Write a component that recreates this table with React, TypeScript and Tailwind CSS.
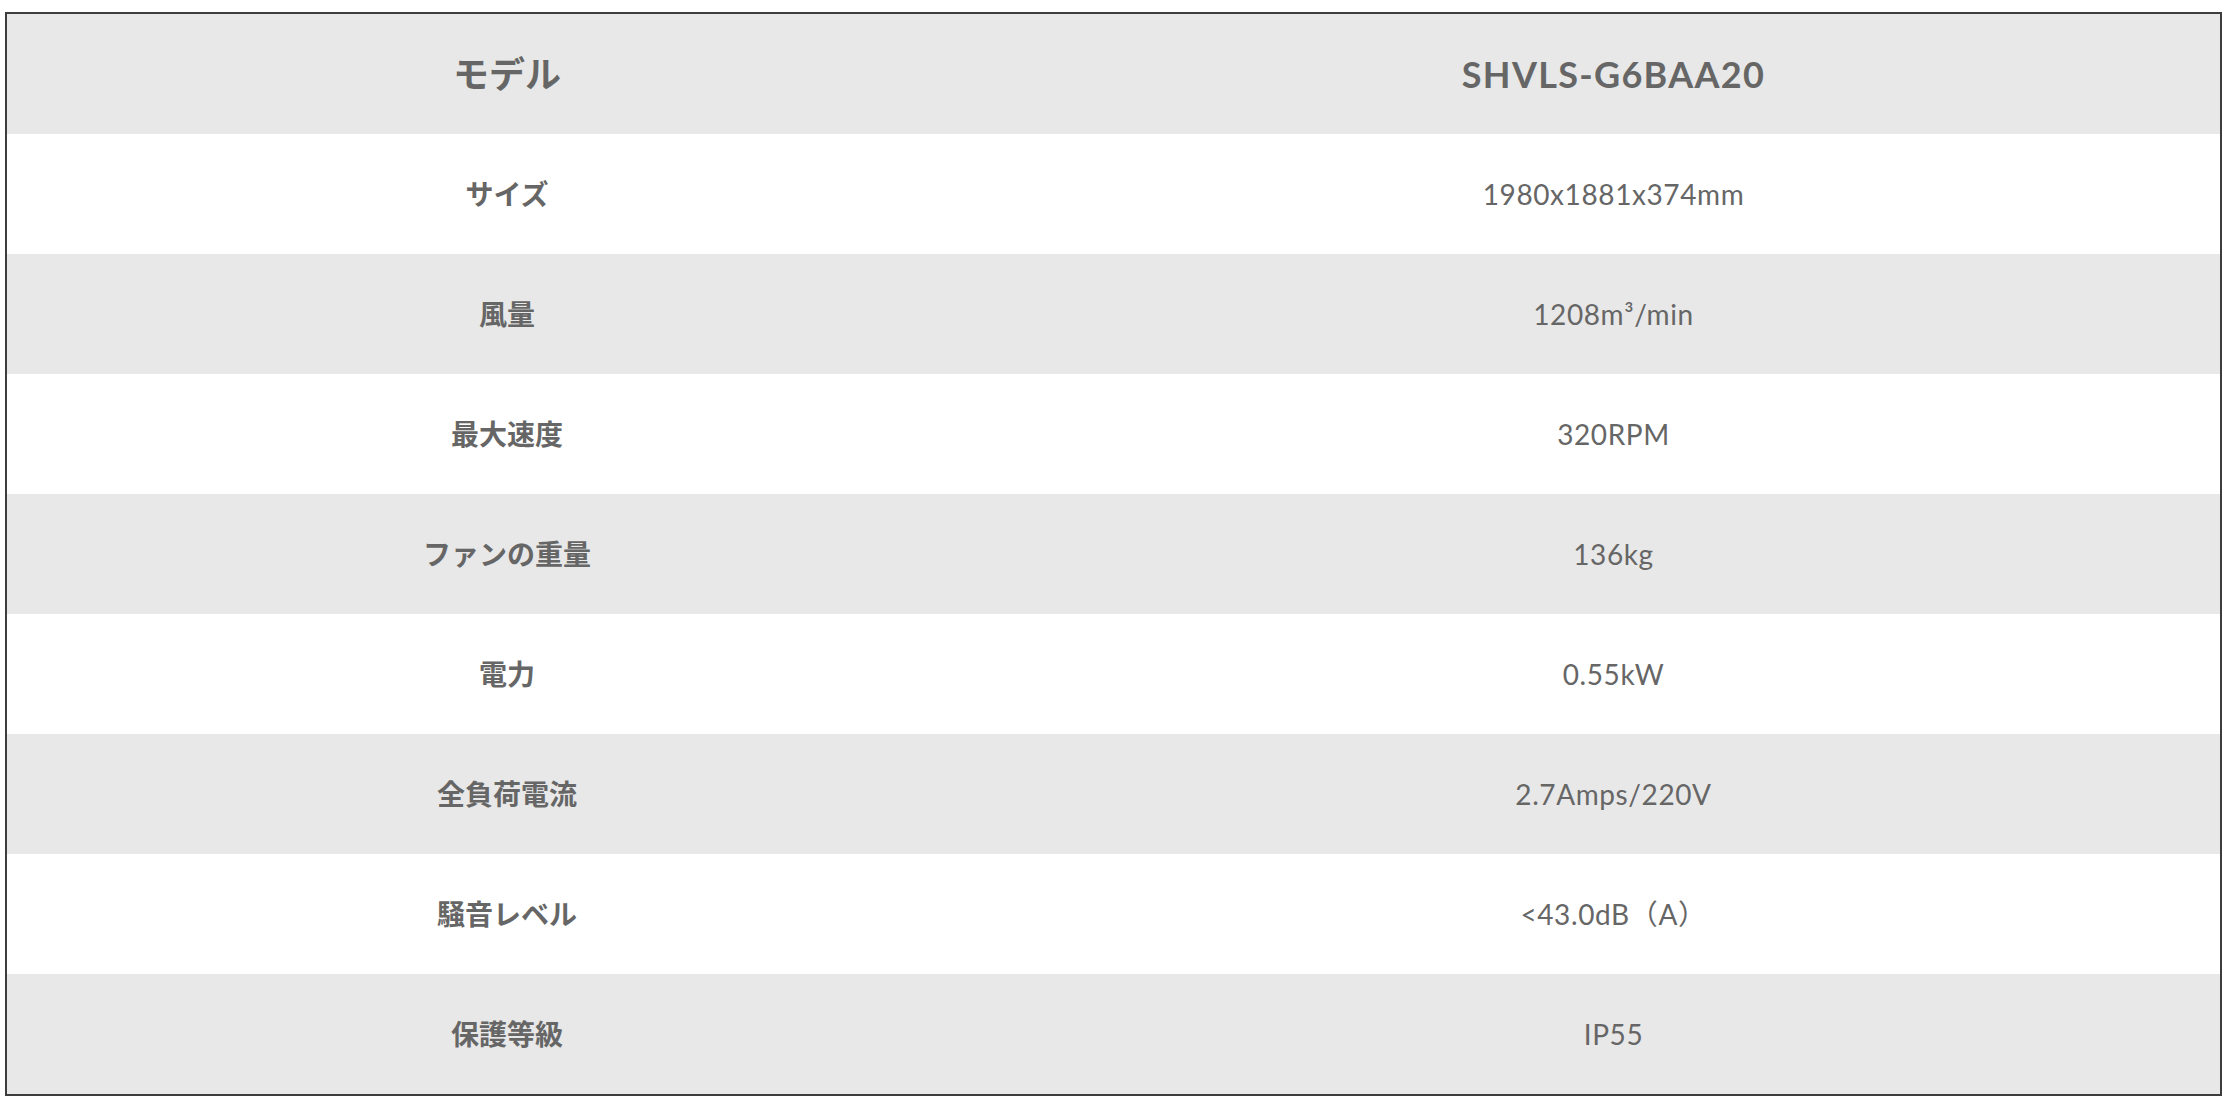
const SPECS: [string, string][] = [
  ["サイズ", "1980x1881x374mm"],
  ["風量", "1208m³/min"],
  ["最大速度", "320RPM"],
  ["ファンの重量", "136kg"],
  ["電力", "0.55kW"],
  ["全負荷電流", "2.7Amps/220V"],
  ["騒音レベル", "<43.0dB（A）"],
  ["保護等級", "IP55"],
];

const FONT = "font-['Lato','Noto_Sans_CJK_JP',sans-serif]";

export default function App() {
  return (
    <div className={`min-h-screen bg-white pt-[12px] pl-[5px] ${FONT}`}>
      <div className="w-[2217px] border-2 border-[#3d3d3d]">
        {/* header */}
        <div className="grid grid-cols-[1000px_1fr] h-[120px] bg-[#e8e8e8] text-[#666666] text-[36px] font-bold">
          <div className="flex items-center justify-center">モデル</div>
          <div className="flex items-center justify-center tracking-[1.3px]">SHVLS-G6BAA20</div>
        </div>

        {SPECS.map(([label, value], i) => (
          <div
            key={label}
            className={`grid grid-cols-[1000px_1fr] h-[120px] text-[#666666] text-[28px] ${
              i % 2 === 0 ? "bg-white" : "bg-[#e8e8e8]"
            }`}
          >
            <div className="flex items-center justify-center font-bold">{label}</div>
            <div className="flex items-center justify-center tracking-[0.6px]">{value}</div>
          </div>
        ))}
      </div>
    </div>
  );
}
